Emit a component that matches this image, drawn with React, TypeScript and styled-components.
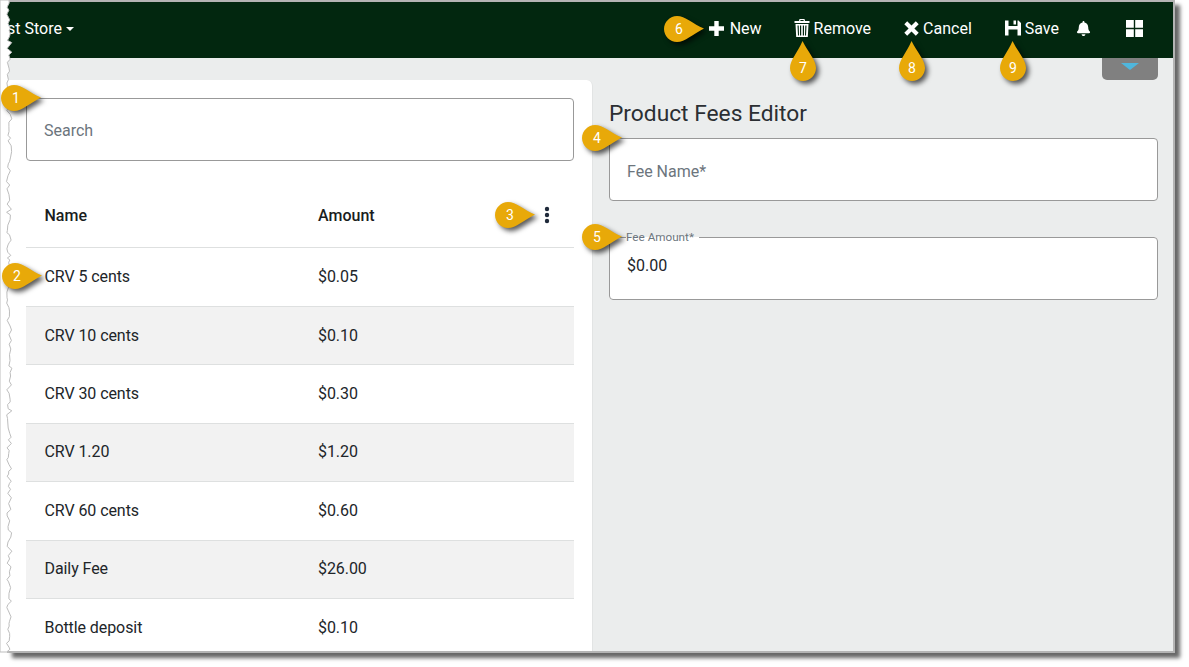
import * as React from "react";
import styled, {createGlobalStyle} from "styled-components";
import {FaBell} from "react-icons/fa";

const GlobalStyle = createGlobalStyle`
  html, body {
    margin: 0;
    padding: 0;
    background: #fff;
    font-family: Roboto, "Liberation Sans", sans-serif;
  }
`;

const Page = styled.div`
  position: relative;
  width: 1189px;
  height: 667px;
  overflow: hidden;
  background: #fff;
`;

const Frame = styled.div`
  box-sizing: border-box;
  width: 1168px;
  height: 653px;
  margin-left: 7px;
  display: flex;
  flex-direction: column;
  overflow: hidden;
  background: #ebeded;
  border: solid #b4b4b4;
  border-width: 2px 2px 2px 0;
  box-shadow: 5px 5px 4px rgba(0, 0, 0, 0.6);
`;

const Header = styled.header`
  box-sizing: border-box;
  flex: 0 0 56px;
  display: flex;
  align-items: center;
  padding: 0 30px 4px 0;
  background: #02270f;
  color: #fff;
  font-size: 16px;
`;

const Brand = styled.div`
  display: flex;
  align-items: center;
  gap: 4px;
  margin-right: auto;
`;

const Caret = styled.span`
  width: 0;
  height: 0;
  margin-top: 2px;
  border-left: 4px solid transparent;
  border-right: 4px solid transparent;
  border-top: 4px solid #fff;
`;

const NavButton = styled.div<{$gap: number}>`
  display: flex;
  align-items: center;
  gap: 4px;
  margin-left: ${(p) => p.$gap}px;

  svg {
    display: block;
    fill: #fff;
  }
`;

const Body = styled.div`
  flex: 1;
  display: flex;
  min-height: 0;
`;

const ListPanel = styled.section`
  box-sizing: border-box;
  flex: 0 0 586px;
  margin-top: 22px;
  padding: 18px 18px 0 19px;
  overflow: hidden;
  background: #fff;
  border-right: 1px solid #e2e4e4;
  border-top-right-radius: 6px;
`;

const Input = styled.input`
  box-sizing: border-box;
  display: block;
  width: 100%;
  height: 63px;
  padding: 3px 17px 0;
  background: #fff;
  border: 1px solid #999;
  border-radius: 4px;
  outline: none;
  color: #212529;
  font: 16px Roboto, "Liberation Sans", sans-serif;

  &::placeholder {
    color: #6c757d;
    opacity: 1;
  }
`;

const SearchInput = styled(Input)`
  padding-top: 1px;
`;

const Row = styled.div<{$head?: boolean; $alt?: boolean}>`
  box-sizing: border-box;
  display: flex;
  align-items: center;
  height: ${(p) => (p.$head ? "87.4px" : "58.45px")};
  padding: ${(p) => (p.$head ? "22px 0 0 18.5px" : "0 0 1px 18.5px")};
  background: ${(p) => (p.$alt ? "#f2f2f2" : "#fff")};
  border-bottom: 1px solid #dee0e0;
  color: ${(p) => (p.$head ? "#1a1d21" : "#212529")};
  font-size: 16px;
  font-weight: ${(p) => (p.$head ? 500 : 400)};
  letter-spacing: ${(p) => (p.$head ? "0" : "-0.08px")};
`;

const NameCell = styled.div`
  flex: 0 0 273.5px;
`;

const AmountCell = styled.div`
  flex: 1;
`;

const MenuDots = styled.svg`
  display: block;
  margin-right: 24px;
`;

const EditorPanel = styled.section`
  flex: 1;
  display: flex;
  flex-direction: column;
  padding: 0 15px 0 16px;
`;

const CollapseTab = styled.div`
  align-self: flex-end;
  flex: 0 0 22px;
  width: 56px;
  display: flex;
  justify-content: center;
  padding-top: 5px;
  box-sizing: border-box;
  background: #808080;
  border-radius: 0 0 5px 5px;
`;

const CollapseArrow = styled.span`
  width: 0;
  height: 0;
  border-left: 9px solid transparent;
  border-right: 9px solid transparent;
  border-top: 7px solid #4fb6dc;
`;

const Title = styled.h2`
  margin: 20px 0 10px;
  color: #2b2f33;
  font-size: 22.75px;
  font-weight: 400;
  line-height: 28px;
`;

const AmountField = styled.fieldset`
  box-sizing: border-box;
  height: 70px;
  margin: 29px 0 0;
  padding: 0 17px;
  background: #fff;
  border: 1px solid #999;
  border-radius: 4px;
`;

const AmountLegend = styled.legend`
  margin-left: -1px;
  padding: 0 5px 0 0;
  color: #6c757d;
  font-size: 11.7px;
  line-height: 14px;
`;

const AmountValue = styled.div`
  margin-top: 12px;
  color: #212529;
  font-size: 16px;
  line-height: 20px;
`;

const TornEdge = styled.svg`
  position: absolute;
  top: 0;
  left: 0;
  display: block;
`;

const Callout = styled.div<{$x: number; $y: number; $up: boolean}>`
  position: absolute;
  left: ${(p) => p.$x}px;
  top: ${(p) => p.$y}px;
  box-sizing: border-box;
  width: 26px;
  height: 26px;
  padding-left: ${(p) => (p.$up ? 0 : 4)}px;
  display: flex;
  align-items: center;
  justify-content: center;
  color: #fff;
  font-size: 14px;
  line-height: 1;

  svg {
    position: absolute;
    left: 0;
    top: 0;
    overflow: visible;
    filter: drop-shadow(3px 3px 2.5px rgba(0, 0, 0, 0.65));
  }

  span {
    position: relative;
  }
`;

function buildTornEdge() {
  // fixed seed so the tear stays the same on every render
  let seed = 7;
  const next = () => {
    seed = (seed * 9301 + 49297) % 233280;
    return seed / 233280;
  };
  let points = "0,0 9,0";
  for (let y = 3; y < 652; y += 2 + next() * 4) {
    points += ` ${(6.5 + next() * 5.5).toFixed(1)},${y.toFixed(1)}`;
  }
  return points + " 9,652 0,652";
}

const tornPoints = buildTornEdge();

const Drop = ({up}: {up: boolean}) => (
  <svg width="26" height="26" viewBox="0 0 26 26">
    <path
      d="M13 0C21 0 29 8 40 12.5C29 18 21 26 13 26C6 26 0 20 0 13C0 6 6 0 13 0Z"
      fill="#e8a909"
      transform={up ? "rotate(-90 13 13)" : undefined}
    />
  </svg>
);

const Marker = ({n, x, y, up = false}: {n: number; x: number; y: number; up?: boolean}) => (
  <Callout $x={x} $y={y} $up={up}>
    <Drop up={up} />
    <span>{n}</span>
  </Callout>
);

const PlusIcon = () => (
  <svg width="17" height="15" viewBox="0 0 17 15">
    <path d="M5.3 0H9.7V5.3H15V9.7H9.7V15H5.3V9.7H0V5.3H5.3Z" />
  </svg>
);

const TrashIcon = () => (
  <svg width="16" height="18" viewBox="0 0 16 18">
    <path d="M5.5 0H10.5L11 2H15.5V4H0.5V2H5ZM6.5 1L6.3 2H9.7L9.5 1Z" fillRule="evenodd" />
    <path d="M1.5 5H14.5L13.8 18H2.2ZM3.5 6.5L4 16.5H5L4.7 6.5ZM6 6.5V16.5H7.2V6.5ZM8.8 6.5V16.5H10V6.5ZM11.3 6.5L11 16.5H12L12.5 6.5Z" fillRule="evenodd" />
  </svg>
);

const CloseIcon = () => (
  <svg width="15" height="15" viewBox="0 0 15 15">
    <path d="M3.2 0.3L7.5 4.6L11.8 0.3L14.7 3.2L10.4 7.5L14.7 11.8L11.8 14.7L7.5 10.4L3.2 14.7L0.3 11.8L4.6 7.5L0.3 3.2Z" />
  </svg>
);

const SaveIcon = () => (
  <svg width="16" height="16" viewBox="0 0 16 16">
    <path d="M0 0.5H3.5V6H12.5V0.5H13.5L16 3V15.5H0ZM3.5 9.5V15.5H12.5V9.5Z" fillRule="evenodd" />
    <path d="M8.5 0.5H11V4.5H8.5Z" />
  </svg>
);

const GridIcon = () => (
  <svg width="17" height="17" viewBox="0 0 17 17">
    <path d="M0 0H7.8V7.8H0ZM9.2 0H17V7.8H9.2ZM0 9.2H7.8V17H0ZM9.2 9.2H17V17H9.2Z" />
  </svg>
);

const fees = [
  {name: "CRV 5 cents", amount: "$0.05"},
  {name: "CRV 10 cents", amount: "$0.10"},
  {name: "CRV 30 cents", amount: "$0.30"},
  {name: "CRV 1.20", amount: "$1.20"},
  {name: "CRV 60 cents", amount: "$0.60"},
  {name: "Daily Fee", amount: "$26.00"},
  {name: "Bottle deposit", amount: "$0.10"},
];

export default function App() {
  return (
    <Page>
      <GlobalStyle />
      <Frame>
        <Header>
          <Brand>
            st Store
            <Caret />
          </Brand>
          <NavButton $gap={0}><PlusIcon /><span>New</span></NavButton>
          <NavButton $gap={32}><TrashIcon /><span>Remove</span></NavButton>
          <NavButton $gap={33}><CloseIcon /><span>Cancel</span></NavButton>
          <NavButton $gap={33}><SaveIcon /><span>Save</span></NavButton>
          <NavButton $gap={17}><FaBell size={15} /></NavButton>
          <NavButton $gap={35}><GridIcon /></NavButton>
        </Header>
        <Body>
          <ListPanel>
            <SearchInput placeholder="Search" readOnly />
            <Row $head>
              <NameCell>Name</NameCell>
              <AmountCell>Amount</AmountCell>
              <MenuDots width="6" height="18" viewBox="0 0 6 18">
                <circle cx="3" cy="3" r="2.2" fill="#1f2a3a" />
                <circle cx="3" cy="9" r="2.2" fill="#1f2a3a" />
                <circle cx="3" cy="15" r="2.2" fill="#1f2a3a" />
              </MenuDots>
            </Row>
            {fees.map((fee, i) => (
              <Row key={fee.name} $alt={i % 2 === 1}>
                <NameCell>{fee.name}</NameCell>
                <AmountCell>{fee.amount}</AmountCell>
              </Row>
            ))}
          </ListPanel>
          <EditorPanel>
            <CollapseTab><CollapseArrow /></CollapseTab>
            <Title>Product Fees Editor</Title>
            <Input placeholder="Fee Name*" readOnly />
            <AmountField>
              <AmountLegend>Fee Amount*</AmountLegend>
              <AmountValue>$0.00</AmountValue>
            </AmountField>
          </EditorPanel>
        </Body>
      </Frame>
      <TornEdge width="14" height="654" viewBox="0 0 14 654">
        <polygon points={tornPoints} fill="#fff" stroke="#bdbdbd" strokeWidth="1" />
      </TornEdge>
      <Marker n={1} x={1} y={85} />
      <Marker n={2} x={2} y={263} />
      <Marker n={3} x={495} y={202} />
      <Marker n={4} x={582} y={125} />
      <Marker n={5} x={582} y={224} />
      <Marker n={6} x={664} y={16} />
      <Marker n={7} x={790} y={55} up />
      <Marker n={8} x={899} y={55} up />
      <Marker n={9} x={1000} y={55} up />
    </Page>
  );
}
